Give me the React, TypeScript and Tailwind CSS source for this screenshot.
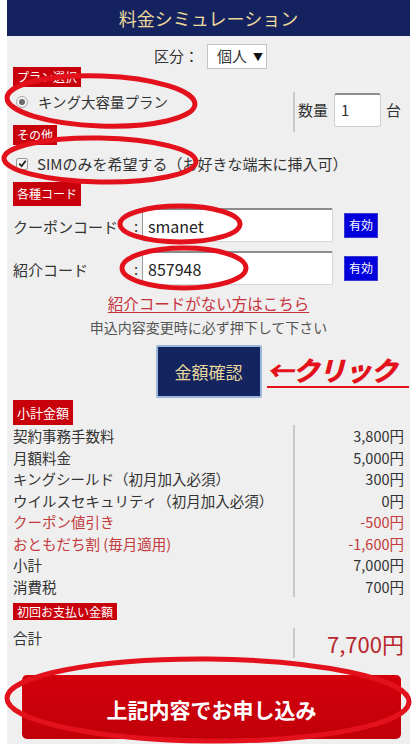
import { ReactNode } from "react";

const rows: { label: string; value: string; red?: boolean }[] = [
  { label: "契約事務手数料", value: "3,800円" },
  { label: "月額料金", value: "5,000円" },
  { label: "キングシールド（初月加入必須）", value: "300円" },
  { label: "ウイルスセキュリティ（初月加入必須）", value: "0円" },
  { label: "クーポン値引き", value: "-500円", red: true },
  { label: "おともだち割 (毎月適用)", value: "-1,600円", red: true },
  { label: "小計", value: "7,000円" },
  { label: "消費税", value: "700円" },
];

function Tag({ children, className = "" }: { children: ReactNode; className?: string }) {
  return (
    <div className={`block w-fit bg-[#c8000b] px-[4px] text-[12px] text-white ${className}`}>
      {children}
    </div>
  );
}

function CodeRow({ label, value, className = "" }: { label: string; value: string; className?: string }) {
  return (
    <div className={`flex h-[34px] items-center ${className}`}>
      <span className="w-[117px] pt-[4px] text-[15px]">{label}</span>
      <span className="w-[12px] pt-[2px] text-center text-[15px]">:</span>
      <div className="flex h-[34px] w-[191px] items-center rounded-[2px] border border-[#d6d6d6] border-t-2 border-t-[#8c8c8c] border-l-[#9a9a9a] bg-white pl-[5px] text-[16px] text-[#222]">
        {value}
      </div>
      <button className="ml-[11px] h-[25px] w-[34px] border border-[#3a3ad0] bg-[#0000dc] text-[12px] text-white">
        有効
      </button>
    </div>
  );
}

function Annotations() {
  return (
    <svg
      className="pointer-events-none absolute left-0 top-0"
      width="420"
      height="744"
      viewBox="0 0 420 744"
      fill="none"
      stroke="#e3111b"
      strokeWidth="5"
    >
      <ellipse cx="101" cy="101" rx="94" ry="25" transform="rotate(2 101 101)" />
      <ellipse cx="100" cy="160" rx="96" ry="22" transform="rotate(1 100 160)" />
      <ellipse cx="180" cy="224" rx="60" ry="18" />
      <ellipse cx="184" cy="268" rx="62" ry="20" />
      <ellipse cx="208" cy="700" rx="201" ry="41" transform="rotate(0.5 208 700)" />
    </svg>
  );
}

export default function App() {
  return (
    <div className="relative h-[744px] w-[420px] overflow-hidden bg-white font-['Noto_Sans_CJK_JP',sans-serif] text-[#333]">
      <div className="ml-[7px] min-h-[744px] w-[403px] bg-[#efefef]">
        <div className="flex h-[36px] items-center justify-center bg-[#152260] text-[18px] text-[#ecd99a]">
          料金シミュレーション
        </div>

        <div className="px-[6px]">
          {/* 区分 */}
          <div className="mt-[8px] flex h-[25px] items-center justify-center pl-[4px]">
            <span className="text-[15px]">区分：</span>
            <div className="ml-[8px] flex h-[25px] w-[60px] items-center border border-[#c4c4c4] bg-white pl-[9px] text-[15px]">
              個人
              <span className="ml-[6px] text-[10px] text-[#111]">▼</span>
            </div>
          </div>

          {/* plan + quantity */}
          <div className="-mt-[2px] flex">
            <div className="flex-1">
              <Tag className="h-[20px] leading-[20px]">プラン選択</Tag>
              <div className="flex h-[30px] items-center">
                <span className="ml-[3px] flex h-[12px] w-[12px] items-center justify-center rounded-full border border-[#a8a8a8] bg-[#f6f6f6]">
                  <span className="h-[6px] w-[6px] rounded-full bg-[#6a6a6a]" />
                </span>
                <span className="ml-[10px] text-[14.5px] leading-[20px]">キング大容量プラン</span>
              </div>
              <Tag className="mt-[8px] h-[20px] leading-[20px]">その他</Tag>
            </div>
            <div className="w-[111px] pt-[25px]">
              <div className="flex h-[40px] items-start border-l-2 border-[#c9c9c9] pl-[3px] pt-[1px]">
                <span className="text-[15px] leading-[34px]">数量</span>
                <div className="ml-[6px] flex h-[34px] w-[47px] items-center rounded-[3px] border border-[#cfcfcf] border-t-2 border-t-[#8c8c8c] bg-white pl-[6px] text-[15px]">
                  1
                </div>
                <span className="ml-[5px] text-[15px] leading-[34px]">台</span>
              </div>
            </div>
          </div>

          {/* SIM */}
          <div className="flex h-[37px] items-center">
            <span className="ml-[3px] flex h-[12px] w-[12px] items-center justify-center rounded-[2px] border border-[#9a9a9a] bg-[#f4f4f4]">
              <svg width="9" height="9" viewBox="0 0 10 10" fill="none" stroke="#222" strokeWidth="2">
                <path d="M1.5 5.2 L4 7.8 L8.6 2" />
              </svg>
            </span>
            <span className="ml-[9px] text-[15px] leading-[20px]">SIMのみを希望する（お好きな端末に挿入可）</span>
          </div>

          {/* codes */}
          <Tag className="h-[24px] leading-[24px]">各種コード</Tag>
          <CodeRow label="クーポンコード" value="smanet" className="mt-[2px]" />
          <CodeRow label="紹介コード" value="857948" className="mt-[9px]" />

          <div className="mt-[8px] text-center text-[15.5px] leading-[20px] text-[#c8323c] underline underline-offset-2">
            紹介コードがない方はこちら
          </div>
          <div className="mt-[4px] text-center text-[14px] leading-[20px] text-[#555]">
            申込内容変更時に必ず押下して下さい
          </div>

          <div className="mt-[8px] flex justify-center">
            <div className="relative h-[53px]">
              <button className="h-[53px] w-[106px] rounded-[2px] border-2 border-[#9bb8dc] bg-[#14245f] text-[17px] text-[#e8d89c]">
                金額確認
              </button>
              <div className="absolute left-full top-[9px] ml-[5px] w-[142px] border-b-2 border-[#e3111b] text-[27px] font-black italic leading-[32px] tracking-[-1px] text-[#e3111b] whitespace-nowrap">
                ←クリック
              </div>
            </div>
          </div>

          {/* subtotal */}
          <Tag className="mt-[2px] h-[25px] leading-[25px] text-[13px]">小計金額</Tag>
          <div className="flex text-[14.5px] leading-[21.5px]">
            <div className="flex-1">
              {rows.map((r) => (
                <div key={r.label} className={r.red ? "text-[#c23a3c]" : ""}>
                  {r.label}
                </div>
              ))}
            </div>
            <div className="w-[111px] border-l-2 border-[#c9c9c9] text-right">
              {rows.map((r) => (
                <div key={r.label} className={r.red ? "text-[#c23a3c]" : ""}>
                  {r.value}
                </div>
              ))}
            </div>
          </div>

          {/* total */}
          <Tag className="mt-[6px] h-[17px] leading-[17px]">初回お支払い金額</Tag>
          <div className="flex h-[38px]">
            <div className="flex-1 pt-[8px] text-[14.5px] leading-[20px]">合計</div>
            <div className="mt-[8px] h-[30px] w-[111px] border-l-2 border-[#c9c9c9] text-right text-[22px] leading-[30px] text-[#b8262b]">
              7,700円
            </div>
          </div>

          <div className="pl-[9px] pr-[3px] pt-[17px] pb-[6px]">
            <button className="flex h-[64px] w-full items-center justify-center rounded-[5px] bg-gradient-to-b from-[#d4000c] to-[#c00009] pt-[6px] text-[21px] font-bold text-white">
              上記内容でお申し込み
            </button>
          </div>
        </div>
      </div>
      <Annotations />
    </div>
  );
}
